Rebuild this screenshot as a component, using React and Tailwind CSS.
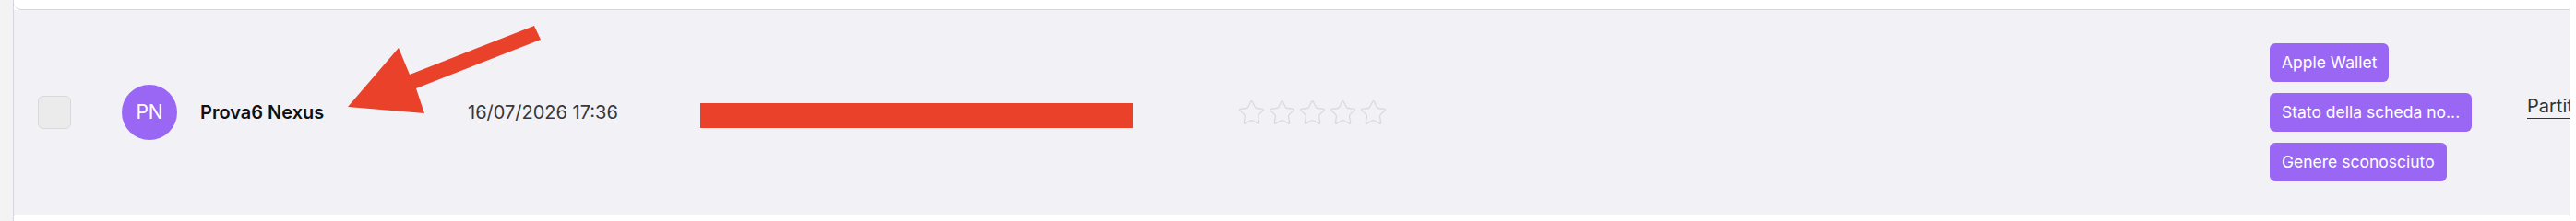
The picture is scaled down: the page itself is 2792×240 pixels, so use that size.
import React from 'react';
import { Star } from 'lucide-react';

const chips = ['Apple Wallet', 'Stato della scheda no...', 'Genere sconosciuto'];

// red annotation arrow drawn on top of the screenshot
const Arrow = () => (
  <svg
    className="absolute left-0 top-0 pointer-events-none"
    width="2792"
    height="240"
    viewBox="0 0 2792 240"
  >
    <polygon
      points="579,28 586,43 451,96 460,123 377,116 432,52 444,81"
      fill="#e9412a"
    />
  </svg>
);

export default function App() {
  return (
    <div className="relative flex h-[240px] w-[2792px] bg-white font-['Inter',sans-serif]">
      <div className="w-[15px] shrink-0 border-r border-[#d6d6dc] bg-[#f3f3f3]" />

      <div className="flex w-[2771px] shrink-0 flex-col border-r border-[#d6d6dc]">
        <div className="h-[11px] rounded-bl-[8px] border-b border-[#d6d6dc] bg-white" />

        <div className="flex h-[223px] items-center border-b border-[#d6d6dc] bg-[#f1f1f6]">
          <div className="w-[117px] shrink-0 pl-[26px]">
            <div className="h-[36px] w-[36px] rounded-[6px] border border-[#d9d9dd] bg-[#ebebeb]" />
          </div>

          <div className="flex w-[375px] shrink-0 items-center gap-[25px]">
            <div className="flex h-[60px] w-[60px] items-center justify-center rounded-full bg-[#9a67f5] text-[21px] text-white">
              PN
            </div>
            <span className="text-[20px] font-semibold text-[#111]">Prova6 Nexus</span>
          </div>

          <div className="w-[252px] shrink-0 text-[20px] text-[#383838]">16/07/2026 17:36</div>

          <div className="w-[582px] shrink-0">
            <div className="mt-[7px] h-[27px] w-[469px] bg-[#e9412a]" />
          </div>

          <div className="flex w-[1119px] shrink-0 items-center gap-[2px]">
            {[0, 1, 2, 3, 4].map(i => (
              <Star key={i} size={31} strokeWidth={1} color="#d9d9de" />
            ))}
          </div>

          <div className="flex w-[279px] shrink-0 flex-col items-start gap-[12px]">
            {chips.map(c => (
              <div
                key={c}
                className="h-[42px] whitespace-nowrap rounded-[6px] bg-[#9a67f5] px-[13px] text-[17.5px] leading-[42px] text-white"
              >
                {c}
              </div>
            ))}
          </div>

          <div className="min-w-0 flex-1 overflow-hidden">
            <span className="mb-[11px] inline-block whitespace-nowrap border-b border-[#333] pb-[3px] text-[20px] leading-[20px] text-[#333]">
              Partita IVA
            </span>
          </div>
        </div>

        <div className="flex-1 bg-white" />
      </div>

      <div className="flex-1 bg-white" />

      <Arrow />
    </div>
  );
}
